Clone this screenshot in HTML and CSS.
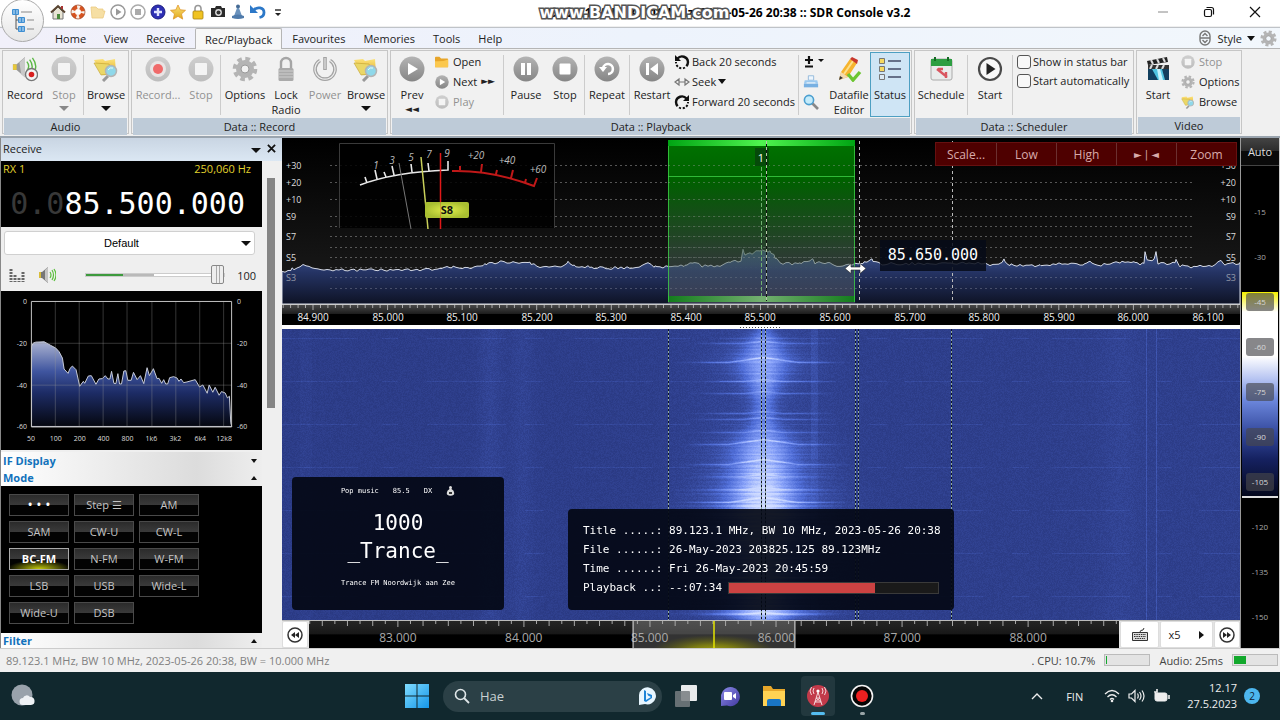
FILE: index.html
```html
<!DOCTYPE html>
<html lang="en">
<head>
<meta charset="utf-8">
<title>SDR Console v3.2</title>
<link rel="stylesheet" href="styles.css">
</head>
<body>
<svg class="sprite" aria-hidden="true">
  <defs>
    <linearGradient id="gBall" x1="0" y1="0" x2="0" y2="1"><stop offset="0" stop-color="#b4b4b4"/><stop offset="1" stop-color="#858585"/></linearGradient>
    <linearGradient id="gPale" x1="0" y1="0" x2="0" y2="1"><stop offset="0" stop-color="#cfcfcf"/><stop offset="1" stop-color="#bdbdbd"/></linearGradient>
    <linearGradient id="gGold" x1="0" y1="0" x2="0" y2="1"><stop offset="0" stop-color="#fbe27a"/><stop offset="1" stop-color="#e0a91c"/></linearGradient>
    <linearGradient id="gWin" x1="0" y1="0" x2="1" y2="1"><stop offset="0" stop-color="#7fdcff"/><stop offset="1" stop-color="#1596e8"/></linearGradient>
    <linearGradient id="gTeams" x1="0" y1="0" x2="1" y2="1"><stop offset="0" stop-color="#8a8ae6"/><stop offset="1" stop-color="#4338a0"/></linearGradient>
  </defs>
  <symbol id="tree" viewBox="0 0 26 26"><path d="M6 5v16h5M6 12h5" fill="none" stroke="#555"/><rect x="2" y="1" width="7" height="6" rx="1" fill="#3f8fd2"/><rect x="8" y="9" width="7" height="6" rx="1" fill="#3f8fd2"/><rect x="8" y="18" width="7" height="6" rx="1" fill="#3f8fd2"/><path d="M4 2v4M7 2v4M10 10v4M13 10v4M10 19v4M13 19v4" stroke="#cfe5f7"/><path d="M11 4h11M17 12h7M17 21h7" stroke="#888"/></symbol>
  <symbol id="house" viewBox="0 0 16 16"><path d="M3 8v7h10V8L8 3z" fill="#e8e4d4" stroke="#777"/><path d="M1 8.500L8 2l7 6.500" fill="none" stroke="#5a4632" stroke-width="2"/><path d="M7 10h3v5H7z" fill="#4b8a3b"/><path d="M12 2v3" stroke="#a33" stroke-width="2"/></symbol>
  <symbol id="ring" viewBox="0 0 16 16"><circle cx="8" cy="8" r="5" fill="none" stroke="#d65320" stroke-width="4"/><circle cx="8" cy="8" r="5" fill="none" stroke="#f6efe8" stroke-width="4" stroke-dasharray="3 4.850" stroke-dashoffset="1.500"/><circle cx="8" cy="8" r="7" fill="none" stroke="#9c4020" stroke-width=".7"/></symbol>
  <symbol id="folderPale" viewBox="0 0 16 16"><path d="M1 3h5l2 2h5v2l2 0-2 7H2z" fill="#f6dfa4" stroke="#ecca80" stroke-width=".8"/></symbol>
  <symbol id="playO" viewBox="0 0 16 16"><circle cx="8" cy="8" r="7" fill="#fff" stroke="#999" stroke-width="1.500"/><path d="M6 4.500l5.500 3.500L6 11.500z" fill="#999"/></symbol>
  <symbol id="stopO" viewBox="0 0 16 16"><circle cx="8" cy="8" r="7" fill="#fff" stroke="#aaa" stroke-width="1.500"/><path d="M5 5h6v6H5z" fill="#aaa"/></symbol>
  <symbol id="plusBall" viewBox="0 0 16 16"><circle cx="8" cy="8" r="7" fill="#2d2fb4" stroke="#1b1c80"/><path d="M8 4v8M4 8h8" stroke="#dfe3ff" stroke-width="2.400"/></symbol>
  <symbol id="star" viewBox="0 0 16 16"><path d="M8 1l2.200 4.800 5.300.5-4 3.600 1.200 5.200L8 12.300l-4.700 2.800 1.200-5.200-4-3.600 5.300-.5z" fill="url(#gGold)" stroke="#e0962a" stroke-width=".8"/></symbol>
  <symbol id="lockGold" viewBox="0 0 16 16"><path d="M5 7V4.500a3 3 0 0 1 6 0V7" fill="none" stroke="#999" stroke-width="1.600"/><rect x="3" y="7" width="10" height="8" rx="1" fill="#f0c322" stroke="#a98412" stroke-width=".8"/></symbol>
  <symbol id="camera" viewBox="0 0 16 16"><path d="M1 4h4l1-2h5l1 2h3v9H1z" fill="#2a2a2a"/><circle cx="8.500" cy="8.500" r="3.400" fill="#ddd"/><circle cx="8.500" cy="8.500" r="2" fill="#333"/></symbol>
  <symbol id="buoy" viewBox="0 0 16 16"><circle cx="8" cy="2.500" r="2" fill="#456a94"/><path d="M7 4h2l3 8H4z" fill="#6b93bd"/><path d="M2 12q6-3 12 0v2q-6 2-12 0z" fill="#4f7bab"/></symbol>
  <symbol id="undo" viewBox="0 0 16 16"><path d="M3.500 6.500C7 2 14 3.500 14 8.500c0 3-2 4.500-4.500 5" fill="none" stroke="#2c78c8" stroke-width="2.800"/><path d="M0 1v8h8z" fill="#2c78c8"/></symbol>
  <symbol id="speakerRec" viewBox="0 0 28 28"><path d="M1 9h4l9-8v22l-9-8H1z" fill="#999"/><path d="M1 9h4v6H1z" fill="#e8c93a"/><path d="M8 7l6-6v22l-4-3z" fill="#c9c9c9"/><path d="M16 6q4 5 0 10M19 4q5 7 1 13M22 2q6 8 2 15" fill="none" stroke="#5cb846" stroke-width="1.500"/><circle cx="21" cy="20" r="6.500" fill="#f3f3f3" stroke="#777" stroke-width="1.500"/><circle cx="21" cy="20" r="3" fill="#d81e1e"/></symbol>
  <symbol id="stopPale" viewBox="0 0 26 26"><circle cx="13" cy="13" r="12.500" fill="url(#gPale)"/><rect x="7" y="7" width="12" height="12" rx="1" fill="#f4f4f4"/></symbol>
  <symbol id="recPale" viewBox="0 0 26 26"><circle cx="13" cy="13" r="12.500" fill="url(#gPale)"/><circle cx="13" cy="13" r="8" fill="#e9e4e4"/><circle cx="13" cy="13" r="5" fill="#f06a6a"/></symbol>
  <symbol id="browse" viewBox="0 0 26 26"><path d="M1 4l9-1 2 2 10-2 1 14-14 2z" fill="url(#gGold)"/><path d="M1 7l15 1 4 10-12 1z" fill="#ead767" stroke="#c39f2d" stroke-width=".6"/><path d="M15 20l-5 5" stroke="#999" stroke-width="3"/><circle cx="18" cy="15" r="5.500" fill="#8fd8ea" stroke="#b4b4b4" stroke-width="1.500"/><path d="M15 14q2-3 5-2" stroke="#e8fbff" fill="none"/></symbol>
  <symbol id="gear" viewBox="0 0 26 26"><circle cx="13" cy="13" r="6.500" fill="none" stroke="#b4b4b4" stroke-width="5"/><circle cx="13" cy="13" r="10.300" fill="none" stroke="#b4b4b4" stroke-width="4" stroke-dasharray="4.600 3.490"/><circle cx="13" cy="13" r="4" fill="none" stroke="#999"/></symbol>
  <symbol id="lockGray" viewBox="0 0 26 26"><path d="M8 12V7a5 5 0 0 1 10 0v5" fill="none" stroke="#a5a5a5" stroke-width="2.400"/><rect x="5.500" y="12" width="15" height="13" rx="1.500" fill="#aaa"/><path d="M6 15h14M6 18h14M6 21h14" stroke="#d2d2d2" stroke-width=".9"/></symbol>
  <symbol id="power" viewBox="0 0 26 26"><path d="M8 4.500a10 10 0 1 0 10 0" fill="none" stroke="#a3a3a3" stroke-width="3.600"/><path d="M8 4.500a10 10 0 1 0 10 0" fill="none" stroke="#ededed" stroke-width="1.200"/><path d="M13 1v13" stroke="#a3a3a3" stroke-width="3.600"/><path d="M13 2v11" stroke="#ededed" stroke-width="1"/></symbol>
  <symbol id="play" viewBox="0 0 26 26"><circle cx="13" cy="13" r="12.500" fill="url(#gBall)"/><path d="M9 7l10 6-10 6z" fill="#fff"/></symbol>
  <symbol id="pause" viewBox="0 0 26 26"><circle cx="13" cy="13" r="12.500" fill="url(#gBall)"/><path d="M8 7h4v12H8zM14 7h4v12h-4z" fill="#fff"/></symbol>
  <symbol id="stop" viewBox="0 0 26 26"><circle cx="13" cy="13" r="12.500" fill="url(#gBall)"/><rect x="7.500" y="7.500" width="11" height="11" rx="1" fill="#fff"/></symbol>
  <symbol id="repeat" viewBox="0 0 26 26"><circle cx="13" cy="13" r="12.500" fill="url(#gBall)"/><path d="M9 12a5 5 0 1 1 5 6" fill="none" stroke="#fff" stroke-width="2.600"/><path d="M5 11h8l-4 5z" fill="#fff"/></symbol>
  <symbol id="restart" viewBox="0 0 26 26"><circle cx="13" cy="13" r="12.500" fill="url(#gBall)"/><path d="M7 7h3v12H7zM19 7v12l-8-6z" fill="#fff"/></symbol>
  <symbol id="folder" viewBox="0 0 16 16"><path d="M0 3q0-1 1-1h4l2 2h7q1 0 1 1v8q0 1-1 1H1q-1 0-1-1z" fill="#e7a529"/><path d="M0 7q8 1 15-2v8q0 1-1 1H1q-1 0-1-1z" fill="#fbc84e"/></symbol>
  <symbol id="back20" viewBox="0 0 16 16"><path d="M3.500 4.500A6 6 0 0 1 14 8c0 2-.6 3-1.600 4.200" fill="none" stroke="#111" stroke-width="2.400"/><path d="M11 13.500A6 6 0 0 1 2 8" fill="none" stroke="#111" stroke-width="2" stroke-dasharray="2.200 1.600"/><path d="M1 1v6h6z" fill="#111"/></symbol>
  <symbol id="fwd20" viewBox="0 0 16 16"><path d="M12.500 4.500A6 6 0 0 0 2 8c0 2 .6 3 1.600 4.200" fill="none" stroke="#111" stroke-width="2.400"/><path d="M5 13.500A6 6 0 0 0 14 8" fill="none" stroke="#111" stroke-width="2" stroke-dasharray="2.200 1.600"/><path d="M15 1v6H9z" fill="#111"/></symbol>
  <symbol id="seek" viewBox="0 0 16 16"><path d="M5 5L1 8l4 3zM11 5l4 3-4 3zM5 8h6" fill="#eee" stroke="#777" stroke-width="1.200"/></symbol>
  <symbol id="plusminus" viewBox="0 0 22 16"><path d="M6 2v8M2 6h8M2 12.500h8" stroke="#111" stroke-width="2.200"/><path d="M15 5h6l-3 3z" fill="#111"/></symbol>
  <symbol id="printer" viewBox="0 0 18 16"><path d="M6 1h6v5H6z" fill="#eef6fd" stroke="#8db6da"/><path d="M2 6h14l1 4H1z" fill="#9ccaf0"/><path d="M1 10h16v4H1z" fill="#78b0e2"/><path d="M4 9h10" stroke="#fff"/></symbol>
  <symbol id="lens" viewBox="0 0 16 16"><path d="M9 9l6 6" stroke="#888" stroke-width="2.600"/><circle cx="6" cy="6" r="4.600" fill="#c5ecfb" stroke="#4b9fd0" stroke-width="1.600"/></symbol>
  <symbol id="pencil" viewBox="0 0 26 26"><path d="M3 24l2-8L14 3l7 4-9 14z" fill="#f6b42e"/><path d="M8 18l9-13" stroke="#fde08c" stroke-width="2"/><path d="M14 3l2-2 6 3-1 4z" fill="#c8372c"/><path d="M3 24l2-8 7 5z" fill="#f3d9b0"/><path d="M3 24l1-4 3 2z" fill="#333"/><path d="M12 18l5 6 7-8" fill="none" stroke="#6cc531" stroke-width="3.400"/></symbol>
  <symbol id="status" viewBox="0 0 26 26"><g fill="#f6d860" stroke="#777"><path d="M2.500 2.500h5v5h-5zM2.500 10.500h5v5h-5z"/><path d="M2.500 18.500h5v5h-5z" fill="#dceaf5"/></g><path d="M11 5h13M11 13h13M11 21h13" stroke="#444b66" stroke-width="1.400"/></symbol>
  <symbol id="calendar" viewBox="0 0 26 26"><rect x="3" y="3" width="21" height="21" rx="2" fill="#e9ecec" stroke="#aaa"/><path d="M3 3h21v7H3z" fill="#2e9e42"/><path d="M7 1v4M20 1v4" stroke="#146b24" stroke-width="2"/><path d="M9 13l10 8M10 13h5M18 16v6" fill="none" stroke="#d95660" stroke-width="2.400"/></symbol>
  <symbol id="playRing" viewBox="0 0 26 26"><circle cx="13" cy="13" r="11" fill="#f8f8f8" stroke="#4a4a4a" stroke-width="2.200"/><path d="M9.500 7l9 6-9 6z" fill="#222"/></symbol>
  <symbol id="clapper" viewBox="0 0 26 26"><path d="M2 5L22 1l1 5L3 9z" fill="#222"/><path d="M6 4l2 4M12 3l2 4M18 2l2 4" stroke="#ddd" stroke-width="2"/><path d="M3 9h21v4H3z" fill="#333"/><path d="M7 9l-2 4M13 9l-2 4M19 9l-2 4" stroke="#ddd" stroke-width="2"/><path d="M3 13h21v11H3z" fill="#123f5e"/><path d="M7 13l6 11h7l-3-11z" fill="#4fc3df"/><path d="M12 13l2 11h4l-3-11z" fill="#c5f3fb"/></symbol>
  <symbol id="expand" viewBox="0 0 16 16"><path d="M3 8V6a5 5 0 0 1 10 0v2zM3 8v2a5 5 0 0 0 10 0V8z" fill="none" stroke="#777" stroke-width="1.400"/><path d="M5.500 6L8 3.500 10.500 6M5.500 10L8 12.500l2.500-2.500" fill="none" stroke="#777" stroke-width="1.400"/></symbol>
  <symbol id="speaker" viewBox="0 0 18 16"><path d="M1 5h3l6-5v16l-6-5H1z" fill="#777"/><path d="M7 3l3-3v16l-3-3z" fill="#c4c4c4"/><path d="M1 5h2v6H1z" fill="#d9bd3a"/><path d="M12 5q2 3 0 6M14 3q3 5 0 10M16 2q4 6 0 12" fill="none" stroke="#5cbf3d" stroke-width="1.200"/></symbol>
  <symbol id="eq" viewBox="0 0 16 14"><path d="M2 1v13M6 7v7M10 10v4M14 4v10" stroke="#666" stroke-width="3" stroke-dasharray="2 1"/></symbol>
</svg>

<header class="titlebar">
  <button class="appmenu" aria-label="Application menu"><svg width="26" height="26"><use href="#tree"/></svg></button>
  <nav class="quick" aria-label="Quick access">
    <button aria-label="Home"><svg><use href="#house"/></svg></button>
    <button aria-label="Support"><svg><use href="#ring"/></svg></button>
    <button aria-label="Open"><svg><use href="#folderPale"/></svg></button>
    <button aria-label="Play"><svg><use href="#playO"/></svg></button>
    <button aria-label="Stop"><svg><use href="#stopO"/></svg></button>
    <button aria-label="Add"><svg><use href="#plusBall"/></svg></button>
    <button aria-label="Favourite"><svg><use href="#star"/></svg></button>
    <button aria-label="Lock"><svg><use href="#lockGold"/></svg></button>
    <button aria-label="Snapshot"><svg><use href="#camera"/></svg></button>
    <button aria-label="Marker"><svg><use href="#buoy"/></svg></button>
    <button aria-label="Undo"><svg><use href="#undo"/></svg></button>
    <button aria-label="Customise"><svg viewBox="0 0 16 16"><path d="M5 6h6" stroke="#222" stroke-width="1.400"/><path d="M5 9h6l-3 3z" fill="#222"/></svg></button>
  </nav>
  <div class="caption">
    <h1>89.123.1 MHz, BW 10 MHz, 2023-05-26 20:38 :: SDR Console v3.2<span class="watermark">www.BANDICAM.com</span></h1>
  </div>
  <div class="wincontrols">
    <button aria-label="Minimise"><svg viewBox="0 0 12 12"><path d="M1 6h10" stroke="#888"/></svg></button>
    <button aria-label="Restore"><svg viewBox="0 0 12 12" fill="none" stroke="#111" stroke-width="1.200"><rect x="1.500" y="3.500" width="7" height="7" rx="1.500"/><path d="M3.500 1.500h5q2 0 2 2v5"/></svg></button>
    <button aria-label="Close"><svg viewBox="0 0 12 12"><path d="M1 1l10 10M11 1L1 11" stroke="#111" stroke-width="1.200"/></svg></button>
  </div>
</header>

<nav class="tabs">
  <button>Home</button><button>View</button><button>Receive</button><button class="on">Rec/Playback</button><button>Favourites</button><button>Memories</button><button>Tools</button><button>Help</button>
  <div class="style"><svg width="16" height="16"><use href="#expand"/></svg><button>Style</button><i class="down"></i><svg width="17" height="17"><use href="#gear"/></svg></div>
</nav>

<section class="ribbon">
  <div class="group">
    <div class="tools">
      <button class="big w42"><svg><use href="#speakerRec"/></svg>Record</button>
      <button class="big w36 off"><svg><use href="#stopPale"/></svg>Stop<i class="down"></i></button>
      <hr>
      <button class="big w42"><svg><use href="#browse"/></svg>Browse<i class="down"></i></button>
    </div>
    <h2>Audio</h2>
  </div>
  <div class="group">
    <div class="tools">
      <button class="big w50 off"><svg><use href="#recPale"/></svg>Record...</button>
      <button class="big w36 off"><svg><use href="#stopPale"/></svg>Stop</button>
      <hr>
      <button class="big w46"><svg><use href="#gear"/></svg>Options</button>
      <button class="big w36"><svg><use href="#lockGray"/></svg>Lock<br>Radio</button>
      <button class="big w42 off"><svg><use href="#power"/></svg>Power</button>
      <button class="big w38"><svg><use href="#browse"/></svg>Browse<i class="down"></i></button>
    </div>
    <h2>Data :: Record</h2>
  </div>
  <div class="group">
    <div class="tools">
      <button class="big w38"><svg><use href="#play"/></svg>Prev<span class="tri">◄◄</span></button>
      <div class="stack w70">
        <button><svg><use href="#folder"/></svg>Open</button>
        <button><svg><use href="#play"/></svg>Next <span class="tri">►►</span></button>
        <button class="off"><svg><use href="#stopPale"/></svg>Play</button>
      </div>
      <hr>
      <button class="big w42"><svg><use href="#pause"/></svg>Pause</button>
      <button class="big w36"><svg><use href="#stop"/></svg>Stop</button>
      <hr>
      <button class="big w42"><svg><use href="#repeat"/></svg>Repeat</button>
      <hr>
      <button class="big w42"><svg><use href="#restart"/></svg>Restart</button>
      <div class="stack wide w124">
        <button><svg><use href="#back20"/></svg>Back 20 seconds</button>
        <button><svg><use href="#seek"/></svg>Seek<i class="down"></i></button>
        <button><svg><use href="#fwd20"/></svg>Forward 20 seconds</button>
      </div>
      <hr>
      <div class="stack icons w28">
        <button aria-label="Adjust"><svg class="pm"><use href="#plusminus"/></svg></button>
        <button aria-label="Print"><svg><use href="#printer"/></svg></button>
        <button aria-label="Find"><svg><use href="#lens"/></svg></button>
      </div>
      <button class="big w42"><svg><use href="#pencil"/></svg>Datafile<br>Editor</button>
      <button class="big w38 pressed"><svg><use href="#status"/></svg>Status</button>
    </div>
    <h2>Data :: Playback</h2>
  </div>
  <div class="group">
    <div class="tools">
      <button class="big w50"><svg><use href="#calendar"/></svg>Schedule</button>
      <hr>
      <button class="big w42"><svg><use href="#playRing"/></svg>Start</button>
      <hr>
      <div class="stack checks w118">
        <label><input type="checkbox">Show in status bar</label>
        <label><input type="checkbox">Start automatically</label>
      </div>
    </div>
    <h2>Data :: Scheduler</h2>
  </div>
  <div class="group">
    <div class="tools">
      <button class="big w38"><svg><use href="#clapper"/></svg>Start</button>
      <div class="stack w64">
        <button class="off"><svg><use href="#stopPale"/></svg>Stop</button>
        <button><svg><use href="#gear"/></svg>Options</button>
        <button><svg><use href="#browse"/></svg>Browse</button>
      </div>
    </div>
    <h2>Video</h2>
  </div>
</section>

<main>
  <aside class="side">
    <header class="sidehead"><h2>Receive</h2><button aria-label="Menu"><i class="down"></i></button><button aria-label="Close panel"><svg width="9" height="9" viewBox="0 0 10 10"><path d="M1 1l8 8M9 1L1 9" stroke="#111" stroke-width="2"/></svg></button></header>
    <div class="sidebody">
      <div class="panel">
        <section class="rx">
          <div class="rxtop"><span>RX 1</span><span>250,060 Hz</span></div>
          <output class="freq"><span>0.0</span>85.500.000</output>
        </section>
        <label class="combo"><select aria-label="Profile"><option>Default</option></select><i class="down"></i></label>
        <div class="volume">
          <svg width="16" height="14"><use href="#eq"/></svg>
          <svg width="18" height="16"><use href="#speaker"/></svg>
          <input type="range" aria-label="Volume" min="0" max="100" value="100"><output>100</output>
        </div>
        <svg class="audio" viewBox="0 0 262 160" role="img" aria-label="Audio spectrum">
          <defs><linearGradient id="gAudio" x1="0" y1="0" x2="0" y2="1"><stop offset="0" stop-color="#aab2d0"/><stop offset=".35" stop-color="#3f559f"/><stop offset=".6" stop-color="#1d2c66"/><stop offset="1" stop-color="#05070f"/></linearGradient></defs>
          <g transform="translate(0 -1) scale(.3333)">
            <path fill="url(#gAudio)" stroke="#c8ccd8" stroke-width="3" d="M92 411V170L97 160 105 157 130 156 150 167 165 175 175 186 185 205 190 238 202 251 208 236 215 229 226 240 237 290 248 275 252 281 263 259 272 258 286 284 295 268 305 267 314 258 322 268 328 268 333 245 340 281 346 282 352 252 357 283 363 283 370 244 376 243 382 272 392 272 399 248 410 270 420 258 430 282 440 234 447 258 459 237 470 267 476 266 484 281 490 270 496 283 502 283 508 264 520 261 530 265 536 275 542 268 550 279 560 277 585 270 598 292 608 286 621 311 627 286 638 308 645 293 657 317 664 306 675 310 682 325 688 320 692 400 695 411z"/>
          </g>
          <path d="M54.500 10v126M78.500 10v126M102.500 10v126M126.500 10v126M151.500 10v126M175.500 10v126M199.500 10v126M223.500 10v126M30 52.500h202M30 94.500h202" stroke="#999" stroke-opacity=".35"/>
          <path d="M30.500 10.500h201v126h-201z" fill="none" stroke="#c4c4c4"/>
          <g class="axis"><g text-anchor="end"><text x="26" y="13">0</text><text x="26" y="55">-20</text><text x="26" y="97">-40</text><text x="26" y="139">-60</text></g>
          <text x="237" y="13">0</text><text x="237" y="55">-20</text><text x="237" y="97">-40</text><text x="237" y="139">-60</text>
          <g text-anchor="middle"><text x="30" y="151">50</text><text x="55" y="151">100</text><text x="79" y="151">200</text><text x="103" y="151">400</text><text x="127" y="151">800</text><text x="151" y="151">1k6</text><text x="175" y="151">3k2</text><text x="200" y="151">6k4</text><text x="224" y="151">12k8</text></g></g>
        </svg>
        <h3 class="fold">IF Display<i class="down"></i></h3>
        <h3 class="fold">Mode<i class="up"></i></h3>
        <div class="modes">
          <button class="dots">• • •</button><button>Step ☰</button><button>AM</button>
          <button>SAM</button><button>CW-U</button><button>CW-L</button>
          <button class="on">BC-FM</button><button>N-FM</button><button>W-FM</button>
          <button>LSB</button><button>USB</button><button>Wide-L</button>
          <button>Wide-U</button><button>DSB</button>
        </div>
        <h3 class="fold last">Filter<i class="up"></i></h3>
      </div>
      <div class="scroll"><i></i></div>
    </div>
  </aside>

  <section class="display">
    <div class="spectrum">
      <svg viewBox="0 0 958 186" role="img" aria-label="Spectrum">
        <defs>
          <linearGradient id="gBack" x1="0" y1="0" x2="0" y2="1"><stop offset="0" stop-color="#000"/><stop offset="1" stop-color="#1d1d1d"/></linearGradient>
          <linearGradient id="gTrace" gradientUnits="userSpaceOnUse" x1="0" y1="112" x2="0" y2="165"><stop offset="0" stop-color="#455f9c"/><stop offset=".4" stop-color="#26366b"/><stop offset="1" stop-color="#0d1226"/></linearGradient>
          <linearGradient id="gGreen" x1="0" y1="0" x2="0" y2="1"><stop offset="0" stop-color="#007400"/><stop offset=".25" stop-color="#006000"/><stop offset=".6" stop-color="#25502a" stop-opacity=".8"/><stop offset=".8" stop-color="#4c5f5c" stop-opacity=".4"/><stop offset="1" stop-color="#777788" stop-opacity=".4"/></linearGradient>
          <linearGradient id="gBar" x1="0" y1="0" x2="1" y2="0"><stop offset="0" stop-color="#00a413"/><stop offset=".5" stop-color="#4ff54f"/><stop offset="1" stop-color="#00a413"/></linearGradient>
          <linearGradient id="gBar2" x1="0" y1="0" x2="1" y2="0"><stop offset="0" stop-color="#137c1c"/><stop offset=".5" stop-color="#74b070"/><stop offset="1" stop-color="#137c1c"/></linearGradient>
          <linearGradient id="gRule" x1="0" y1="0" x2="0" y2="1"><stop offset="0" stop-color="#484848"/><stop offset="1" stop-color="#1c1c1c"/></linearGradient>
          <radialGradient id="gLime"><stop offset="0" stop-color="#e3f04c"/><stop offset="1" stop-color="#a9bf31"/></radialGradient>
        </defs>
        <path d="M0 0h958v165H0z" fill="url(#gBack)"/>
        <g stroke="#777" stroke-dasharray="2 3" stroke-opacity=".7"><path d="M48 26.500h863M48 43.500h863M48 60.500h863M48 77.500h863M48 87.500h863M48 97.500h863M48 108.500h863M48 118.500h863M48 128.500h863M48 138.500h863M48 149.500h863"/></g>
        <path d="M57 4h216v85H57z" fill="#000" fill-opacity=".85"/>
        <path d="M57.500 89V4.500h215V89" fill="none" stroke="#3a3a3a"/>
        <path id="trace" fill="url(#gTrace)" fill-opacity=".92" stroke="#d5dae6"/>
        <path d="M48 138.500h863M48 149.500h863" stroke="#99a" stroke-dasharray="2 3" stroke-opacity=".35"/>
        <rect x="386" y="1" width="187" height="163" fill="url(#gGreen)"/>
        <rect x="386" y="1" width="187" height="6" fill="url(#gBar)"/><rect x="386" y="157" width="187" height="6" fill="url(#gBar2)"/>
        <path d="M386 37.500h187M386.500 7v156M572.500 7v156" stroke="#3ccf46" stroke-opacity=".8"/>
        <path d="M386 26.500h187M386 43.500h187M386 60.500h187M386 77.500h187M386 87.500h187M386 97.500h187M386 108.500h187M386 118.500h187" stroke="#9a9a9a" stroke-dasharray="2 3" stroke-opacity=".4"/>
        <rect x="473" y="9" width="14" height="18" fill="#064a0a"/>
        <text x="479" y="23" class="mk">1</text>
        <path d="M479.500 28v130" stroke="#6fb070" stroke-dasharray="4 2"/><path d="M484.500 2v160" stroke="#111"/><path d="M484.500 2v160" stroke="#b5c7a8" stroke-dasharray="3 3"/>
        <path d="M577.500 2v162M670.500 2v162" stroke="#bbb" stroke-dasharray="3 3"/>
        <g fill="none"><path d="M78 46Q112 33 166 31V22M85 44l-2-6M95 40l-2-9M104 38l-2-5M112 36l-2-9M130 33l-1-8M147 32l-1-8" stroke="#e8e8e8" stroke-width="1.600"/><path d="M170 32Q210 31 252 47l3-8M199 33l1-8M229 39l2-8M178 31v-4M214 35l1-4M243 44l1-4" stroke="#c01818" stroke-width="2"/></g>
        <path d="M117 24l12 66" stroke="#777"/><path d="M139 18l7 72" stroke="#c9d05a" stroke-width="1.500"/><path d="M158.500 14v76" stroke="#e01818" stroke-width="1.500"/>
        <g class="dial"><text x="94" y="30">1</text><text x="110" y="25">3</text><text x="129" y="22">5</text><text x="147" y="19">7</text><text x="165" y="18">9</text><text x="194" y="20">+20</text><text x="225" y="25">+40</text><text x="256" y="34">+60</text></g>
        <rect x="143" y="63" width="44" height="16" rx="2" fill="url(#gLime)"/><text x="165" y="75" class="s8">S8</text><path d="M158.500 63v16" stroke="#d8482a" stroke-opacity=".35"/>
        <g class="db"><text x="4" y="30">+30</text><text x="4" y="47">+20</text><text x="4" y="64">+10</text><text x="4" y="81">S9</text><text x="4" y="101">S7</text><text x="4" y="122">S5</text><text x="4" y="142" opacity=".6">S3</text>
        <g text-anchor="end"><text x="954" y="30">+30</text><text x="954" y="47">+20</text><text x="954" y="64">+10</text><text x="954" y="81">S9</text><text x="954" y="101">S7</text><text x="954" y="122">S5</text><text x="954" y="142" opacity=".6">S3</text></g></g>
        <path d="M598 101h106v31H598z" fill="#060a18" fill-opacity=".85"/><text x="651" y="121" class="tip">85.650.000</text>
        <path d="M563 129.500l6-5v3.500h9v-3.500l6 5-6 5V131h-9v3.500z" fill="#fff" stroke="#222" stroke-width=".6"/>
        <path d="M0 165h958v21H0z" fill="#000"/><path d="M0 166h958v9H0z" fill="url(#gRule)"/><path d="M0 165.500h958" stroke="#ccc"/>
        <g id="ruler" class="rule"></g>
      </svg>
      <div class="redbar"><button>Scale...</button><button>Low</button><button>High</button><button class="tri">► | ◄</button><button>Zoom</button></div>
    </div>
    <div class="splitter"></div>
    <div class="waterfall">
      <canvas id="fall" width="958" height="291"></canvas>
      <section class="rds"><p><span>Pop music</span><span>85.5</span><span>DX</span><svg width="9" height="10" viewBox="0 0 9 10"><path d="M3 1.500a1.500 1.500 0 0 1 3 0L5.500 3Q9 5 8 8.500 4.500 11 1 8.500 0 5 3.500 3z" fill="#ddd"/><path d="M3 6h3v2H3z" fill="#333"/></svg></p><strong>1000<br>_Trance_</strong><p>Trance FM Noordwijk aan Zee</p></section>
      <section class="info"><p>Title .....: 89.123.1 MHz, BW 10 MHz, 2023-05-26 20:38</p><p>File ......: 26-May-2023 203825.125 89.123MHz</p><p>Time ......: Fri 26-May-2023 20:45:59</p><p class="play"><span>Playback ..: --:07:34</span><span class="bar"><i style="width:70%"></i></span></p></section>
    </div>
    <div class="band">
      <button class="sq" aria-label="Band down"><svg width="16" height="16" viewBox="0 0 16 16"><circle cx="8" cy="8" r="7" fill="none" stroke="#333" stroke-width="1.500"/><path d="M8 5v6L4 8zM12 5v6L8 8z" fill="#222"/></svg></button>
      <svg class="bandscale" viewBox="0 0 811 28" preserveAspectRatio="xMinYMin slice" role="img" aria-label="Band">
        <defs><linearGradient id="gBand" x1="0" y1="0" x2="0" y2="1"><stop offset="0" stop-color="#252525"/><stop offset=".45" stop-color="#181818"/><stop offset=".5" stop-color="#000"/></linearGradient><radialGradient id="gGlow" gradientUnits="userSpaceOnUse" cx="0" cy="0" r="1" gradientTransform="translate(405 30) scale(62 16)"><stop offset="0" stop-color="#aaaa08"/><stop offset=".4" stop-color="#8a8a0c" stop-opacity=".8"/><stop offset="1" stop-color="#66660a" stop-opacity="0"/></radialGradient></defs>
        <path d="M0 0h811v28H0z" fill="url(#gBand)"/><path d="M324 0h163v28H324z" fill="#fff" fill-opacity=".2"/><path d="M324 6h163v22H324z" fill="url(#gGlow)"/>
        <g id="bandticks" class="bandtext"></g><path d="M324.500 0v28M486.500 0v28" stroke="#ddd"/><path d="M405.500 0v28" stroke="#e6e600" stroke-width="1.500"/>
      </svg>
      <button class="kb" aria-label="Keyboard"><svg width="18" height="14" viewBox="0 0 18 14"><path d="M1.500 4.500h15v8h-15z" fill="#ddd" stroke="#333"/><path d="M3 6.500h12M3 8.500h12M4 10.500h10" stroke="#333" stroke-dasharray="1.500 .8"/><path d="M9 4q0-2 3-2l1-2" fill="none" stroke="#333"/></svg></button>
      <button class="x5">x5<svg width="6" height="8" viewBox="0 0 6 8"><path d="M0 0l5 4-5 4z" fill="#111"/></svg></button>
      <button class="sq" aria-label="Band up"><svg width="16" height="16" viewBox="0 0 16 16"><circle cx="8" cy="8" r="7" fill="none" stroke="#333" stroke-width="1.500"/><path d="M4 5v6l4-3zM8 5v6l4-3z" fill="#222"/></svg></button>
    </div>
  </section>

  <aside class="levels">
    <button>Auto</button>
    <ul><li>-15</li><li>-30</li><li class="b">-45</li><li class="b">-60</li><li class="b">-75</li><li class="b">-90</li><li class="b">-105</li><li>-120</li><li>-135</li><li>-150</li></ul>
  </aside>
</main>

<footer class="statusbar">
  <span class="desc">89.123.1 MHz, BW 10 MHz, 2023-05-26 20:38, BW = 10.000 MHz</span>
  <span>. CPU: 10.7%</span><span class="gauge"><i class="thin"></i></span>
  <span>Audio: 25ms</span><span class="gauge"><i style="width:29%"></i></span>
</footer>

<nav class="taskbar">
  <div><svg width="24" height="24" viewBox="0 0 24 24"><circle cx="11" cy="11" r="10.500" fill="#99a2ab"/><path d="M12 21a3.500 3.500 0 0 1 0-7 4 4 0 0 1 7-1 4 4 0 0 1 1 8z" fill="#eef1f4"/></svg></div>
  <div class="dock">
    <button class="start" aria-label="Start"><svg width="24" height="24" viewBox="0 0 24 24"><path d="M0 0h11.500v11.500H0zM12.500 0H24v11.500H12.500zM0 12.500h11.500V24H0zM12.500 12.500H24V24H12.500z" fill="url(#gWin)"/></svg></button>
    <label class="search"><svg width="16" height="16" viewBox="0 0 16 16"><circle cx="6.500" cy="6.500" r="5" fill="none" stroke="#dfe6e8" stroke-width="1.600"/><path d="M10 10l5 5" stroke="#dfe6e8" stroke-width="1.800"/></svg><input type="text" aria-label="Search" placeholder="Hae"><svg width="18" height="20" viewBox="0 0 18 20"><path d="M1 19V9a8.500 8.500 0 1 1 6 9z" fill="#e8f6ff"/><path d="M6 4l2 1v9l5-3-3-1.500L9 7l5 2v3l-6 4-2-1z" fill="#1c83d6"/></svg></label>
    <button aria-label="Task view"><svg width="22" height="22" viewBox="0 0 22 22"><rect x="6" y="0" width="16" height="16" rx="1" fill="#e9ebec"/><rect x="0" y="6" width="15" height="16" rx="1" fill="#777d80" fill-opacity=".85"/></svg></button>
    <button aria-label="Chat"><svg width="20" height="22" viewBox="0 0 20 22"><path d="M1 21V10a9.500 9.500 0 1 1 6 10.500z" fill="url(#gTeams)"/><rect x="4" y="7" width="8" height="8" rx="1" fill="#fff"/><path d="M13 10l3-2v6l-3-2z" fill="#fff"/></svg></button>
    <button aria-label="Explorer"><svg width="24" height="22" viewBox="0 0 24 22"><path d="M1 1h8l2 3h12v17H1z" fill="#e7a72a"/><path d="M1 6h22v15H1z" fill="#ffd253"/><path d="M5 21v-5q0-2 2-2h10q2 0 2 2v5z" fill="#1976c5"/></svg></button>
    <button class="active" aria-label="SDR Console"><svg width="24" height="24" viewBox="0 0 24 24"><circle cx="12" cy="12" r="11" fill="#c23a4a"/><path d="M12 8l-4 13M12 8l4 13M10 14h4M9 18h6M10 14l5 4M14 14l-5 4M8 4q-2 3 0 6M5.500 3q-3 4 0 8M16 4q2 3 0 6M18.500 3q3 4 0 8" fill="none" stroke="#f4d6da"/><circle cx="12" cy="7" r="1.600" fill="#fff"/></svg></button>
    <button class="run" aria-label="Recorder"><svg width="24" height="24" viewBox="0 0 24 24"><circle cx="12" cy="12" r="10.500" fill="#050505" stroke="#f2f2f2" stroke-width="1.600"/><circle cx="12" cy="12" r="6" fill="#ee2020"/></svg></button>
  </div>
  <div class="tray">
    <svg width="12" height="8" viewBox="0 0 12 8"><path d="M1 7l5-5 5 5" fill="none" stroke="#eee" stroke-width="1.400"/></svg>
    <span class="lang">FIN</span>
    <svg width="16" height="14" viewBox="0 0 16 14"><path d="M1 5q7-7 14 0M3.500 8q4.500-4.500 9 0M6 10.500q2-2 4 0" fill="none" stroke="#eee" stroke-width="1.300"/><circle cx="8" cy="12" r="1.300" fill="#eee"/></svg>
    <svg width="17" height="14" viewBox="0 0 17 14"><path d="M1 5h2.500L7 1.500v11L3.500 9H1zM9.500 4.500q1.500 2.500 0 5M11.500 3q3 4 0 8M14 1.500q4 5.500 0 11" fill="none" stroke="#eee" stroke-width="1.200"/></svg>
    <svg width="17" height="14" viewBox="0 0 17 14"><rect x="2" y="4" width="12" height="8" rx="2" fill="#eee" stroke="#eee"/><path d="M16 6v4" stroke="#eee" stroke-width="1.600"/><path d="M4 0v3H2l1 4" fill="none" stroke="#eee" stroke-width="1.600"/></svg>
    <time>12.17<br>27.5.2023</time>
    <span class="count">2</span>
  </div>
</nav>
<script src="display.js"></script>
</body>
</html>
```
FILE: styles.css
```css
* { box-sizing: border-box; }
body { margin: 0; min-height: 100vh; display: flex; flex-direction: column; font-family: "Open Sans", "Noto Sans", sans-serif; font-size: 11px; line-height: 15px; color: #222; background: #efefef; }
button { font: inherit; color: inherit; background: none; border: 0; padding: 0; margin: 0; white-space: nowrap; }
h1, h2, h3, p, ul { margin: 0; padding: 0; font-size: inherit; font-weight: normal; list-style: none; }
svg { display: block; flex: none; }
.sprite { position: absolute; width: 0; height: 0; }
.down, .up { display: inline-block; flex: none; width: 0; height: 0; border: 4px solid transparent; border-top: 5px solid #111; border-bottom: 0; }
.up { border: 4px solid transparent; border-bottom: 5px solid #111; border-top: 0; }
.tri { font-family: "DejaVu Sans", sans-serif; }

.titlebar { position: relative; display: flex; align-items: center; height: 26px; background: #fff; padding: 0 2px 2px 0; }
.appmenu { position: absolute; z-index: 2; left: 1px; top: -1px; width: 43px; height: 43px; border: 1px solid #aaa; border-radius: 50%; background: linear-gradient(#fff, #f1f1f1 55%, #e6e6e6); display: grid; place-items: center; }
.quick { display: flex; gap: 4px; padding-left: 50px; }
.quick svg { width: 16px; height: 16px; }
.caption { flex: 1; display: flex; justify-content: center; padding-left: 28px; }
.caption h1 { position: relative; font-size: 12px; font-weight: 700; color: #000; white-space: nowrap; }
.watermark { position: absolute; left: -4px; top: -1px; font: 700 16px/17px "DejaVu Sans", sans-serif; color: #fff; -webkit-text-stroke: 3px #555; paint-order: stroke fill; }
.wincontrols { display: flex; }
.wincontrols button { width: 46px; height: 24px; display: grid; place-items: center; }
.wincontrols svg { width: 12px; height: 12px; }

.tabs { display: flex; height: 22px; border-top: 1px solid #bfc3c8; border-bottom: 1px solid #b5b5b5; margin-top: 1px; padding-left: 46px; background: linear-gradient(90deg, #f1f0fa, #edf3fc 50%, #f2f7fc); }
.tabs > button { padding: 0 9px; }
.tabs > .on { height: 21px; background: #f7f7f7; border: 1px solid #b5b5b5; border-bottom: 0; border-radius: 2px 2px 0 0; margin: 0 1px; }
.style { margin-left: auto; display: flex; align-items: center; gap: 5px; padding-right: 3px; }

.ribbon { display: flex; gap: 2px; padding: 1px 2px 2px; height: 89px; background: #f0f0f0; border-bottom: 2px solid #9aa4ae; }
.group { display: flex; flex-direction: column; border: 1px solid #c6c6c6; background: #f1f1f1; }
.tools { flex: 1; display: flex; align-items: flex-start; padding: 1px 1px 0; }
.group h2 { height: 17px; line-height: 17px; text-align: center; background: #becbd8; margin: 0 1px; }
.tools hr { width: 1px; height: 60px; margin: 3px 1px; border: 0; background: #ccc; }
.big { display: flex; flex-direction: column; align-items: center; height: 65px; padding-top: 4px; }
.big svg { width: 26px; height: 26px; margin-bottom: 5px; }
.big .down { margin-top: 4px; border-width: 5px 5px 0; }
.big .tri { font-size: 9px; }
.off { color: #929292; }
.off .down { border-top-color: #888; }
.pressed { background: #cfe5f5; border: 1px solid #4d9fc2; padding-top: 3px; }
.stack { display: flex; flex-direction: column; gap: 5px; padding: 2px 0 0 3px; }
.stack button, .stack label { display: flex; align-items: center; gap: 4px; height: 15px; }
.stack svg { width: 14px; height: 14px; }
.stack .tri { font-size: 9px; }
.wide { padding-left: 1px; }
.wide button { gap: 2px; }
.wide svg, .icons svg { width: 16px; height: 16px; }
.icons .pm { width: 22px; }
.checks { gap: 4px; }
.checks label { gap: 2px; white-space: nowrap; }
.checks input { appearance: none; width: 14px; height: 14px; margin: 0; border: 1px solid #555; border-radius: 3px; background: #f8f8f8; }
.w28 { width: 28px; } .w36 { width: 36px; } .w38 { width: 40px; } .w42 { width: 42px; } .w46 { width: 46px; } .w50 { width: 50px; }
.w64 { width: 62px; } .w70 { width: 70px; } .w118 { width: 118px; } .w124 { width: 124px; }

main { flex: 1; display: grid; grid-template-columns: 282px 1fr 40px; background: #000; border-bottom: 1px solid #ccc; }
.side { background: #efefef; border-left: 1px solid #888; display: flex; flex-direction: column; }
.sidehead { height: 23px; display: flex; align-items: center; gap: 6px; padding: 0 6px 3px 2px; background: linear-gradient(#c9d5e3, #dbe7f3); }
.sidehead h2 { flex: 1; }
.sidehead .down { border-width: 5px 5px 0; }
.sidebody { flex: 1; display: flex; }
.panel { width: 261px; display: flex; flex-direction: column; }
.rx { height: 66px; background: #000; color: #e1d22d; padding: 0 11px 0 2px; }
.rxtop { display: flex; justify-content: space-between; }
.freq { display: block; text-align: right; margin: 9px 6px 0 0; font: 30px/38px "DejaVu Sans Mono", monospace; color: #fff; }
.freq span { color: #383838; }
.combo { position: relative; display: block; margin: 4px 7px 0 3px; }
.combo select { appearance: none; width: 100%; height: 24px; border: 1px solid #d0d0d0; border-radius: 3px; background: #fff; text-align-last: center; padding: 0 16px 0 0; font: 11px "Liberation Sans", sans-serif; }
.combo .down { position: absolute; right: 4px; top: 10px; border-width: 5px 5px 0; }
.volume { display: flex; align-items: center; height: 36px; padding: 4px 6px 0 8px; }
.volume svg + svg { margin: 0 29px 0 13px; }
.volume input { appearance: none; width: 141px; height: 20px; margin: 0 12px 0 0; background: none; }
.volume input::-webkit-slider-runnable-track { height: 4px; border: 1px solid #ccc; background: linear-gradient(90deg, #3d9a3d 0 27%, #b9b9b9 27% 49%, #fff 49%); }
.volume input::-webkit-slider-thumb { appearance: none; width: 13px; height: 19px; margin-top: -9px; border: 1px solid #888; border-radius: 2px; background: linear-gradient(90deg, #eee 4px, #aaa 4px 5px, #eee 5px 7px, #aaa 7px 8px, #eee 8px); }
.audio { width: 100%; height: auto; background: #000; margin-bottom: 2px; }
.axis { font-size: 7px; fill: #ddd; }
.fold { display: flex; align-items: center; justify-content: space-between; height: 17px; padding: 0 5px 0 2px; font-weight: 700; color: #1272bc; background: linear-gradient(90deg, #fff, #dcdcdc 75%, #eee); }
.fold i { border-left-width: 3px; border-right-width: 3px; border-top-width: 4px; }
.fold .up { border-top-width: 0; border-bottom-width: 4px; }
.last { height: 15px; }
.modes { flex: 1; display: grid; grid-template-columns: repeat(3, 60px); grid-auto-rows: 22px; gap: 5px; align-content: start; padding: 8px 8px 7px; background: #000; }
.modes button { border: 1px solid #4a4a4a; background: linear-gradient(#2b2b2b, #3a3a3a 49%, #030303 50%); color: #c4c4c4; line-height: 18px; }
.modes .on { border-color: #aaa; color: #fff; font-weight: 700; background: radial-gradient(ellipse 32px 9px at 50% 100%, #c5cc0c, transparent), linear-gradient(#2b2b2b, #3a3a3a 49%, #030303 50%); }
.modes .dots { color: #fff; font-size: 14px; }
.scroll { padding: 17px 0 0 5px; }
.scroll i { display: block; width: 8px; height: 230px; background: #858585; }

.display { display: flex; flex-direction: column; padding-top: 1px; min-width: 0; }
.spectrum { position: relative; }
.spectrum > svg { width: 100%; height: auto; }
.redbar { position: absolute; right: 3px; top: 3px; display: grid; grid-template-columns: repeat(5, 60px); height: 24px; background: #4e0000; border: 1px solid #661010; color: #d8aaaa; font-size: 12px; }
.redbar button + button { border-left: 1px solid #6b3030; }
.redbar .tri { font-size: 10px; }
.db { font-size: 9px; fill: #ddd; }
.dial { font-size: 10px; font-style: italic; fill: #bbb; text-anchor: middle; }
.s8 { font-size: 11px; font-weight: 700; text-anchor: middle; fill: #111; }
.mk { font-size: 11px; text-anchor: middle; fill: #fff; }
.tip { font: 15px "DejaVu Sans Mono", monospace; text-anchor: middle; fill: #fff; }
.rule { font-size: 10px; text-anchor: middle; fill: #eee; }
.bandtext { font-size: 12px; text-anchor: middle; fill: #aaa; }
.splitter { height: 4px; background: repeating-linear-gradient(90deg, #444 0 1px, #fff 1px 3px) center / 42px 1px no-repeat, #fff; }
.waterfall { position: relative; flex: 1; min-height: 290px; background: #2d3e8b; }
.waterfall canvas { position: absolute; width: 100%; height: 100%; }
.rds, .info { position: absolute; bottom: 10px; border-radius: 4px; background: rgba(4, 9, 22, .93); color: #fff; font: 11px/19px "DejaVu Sans Mono", monospace; white-space: nowrap; }
.rds { left: 10px; width: 212px; height: 133px; display: flex; flex-direction: column; align-items: center; justify-content: space-between; padding: 8px 0 21px; font-size: 7px; line-height: 12px; }
.rds p { display: flex; align-items: center; gap: 14px; }
.rds strong { font-weight: 400; font-size: 21px; line-height: 28px; text-align: center; }
.info { left: 286px; width: 386px; padding: 12px 15px 13px; }
.play { display: flex; align-items: center; gap: 6px; }
.bar { flex: 1; height: 12px; border: 1px solid #3a3a3a; background: #1a1a1a; }
.bar i { display: block; height: 100%; background: #cb4242; }
.band { display: flex; height: 28px; gap: 1px; background: #e4e4e4; border-top: 1px solid #bbb; }
.band button { background: #fff; border: 1px solid #ddd; border-radius: 2px; display: flex; align-items: center; justify-content: center; }
.sq { width: 26px; } .kb { width: 39px; } .x5 { width: 53px; gap: 18px; }
.bandscale { flex: 1; min-width: 0; height: 27px; }
.levels { background: #000; color: #aaa; border-left: 1px solid #999; border-right: 1px solid #ccc; display: flex; flex-direction: column; }
.levels button { height: 28px; color: #ddd; border-bottom: 1px solid #444; background: linear-gradient(#444, #2c2c2c 49%, #0a0a0a 50%); }
.levels ul { flex: 1; display: grid; grid-auto-rows: 45px; align-content: start; justify-items: center; align-items: center; margin: 0 1px; padding-top: 23px; font-size: 8px; line-height: 18px; background: linear-gradient(#f3ef00, #fff) 0 126px / 100% 20px no-repeat, linear-gradient(#fff 0 24%, #b9c6f2 36%, #6c87dc 48%, #33489c 66%, #152160 80%, #04071c) 0 146px / 100% 184px no-repeat, linear-gradient(#ddd, #ddd) 0 330px / 100% 2px no-repeat; }
.levels .b { width: 28px; text-align: center; border-radius: 3px; background: rgba(70, 70, 75, .65); color: #d8d8d8; }

.statusbar { display: flex; align-items: center; height: 23px; padding: 0 2px 1px 6px; color: #444; background: #f0f0f0; }
.desc { flex: 1; color: #808080; }
.gauge { width: 46px; height: 12px; margin: 0 9px; padding: 1px; border: 1px solid #bbb; background: #e3e3e3; }
.gauge:last-child { margin-right: 0; }
.gauge i { display: block; height: 100%; background: #12a82c; }
.gauge .thin { width: 1px; }

.taskbar { display: grid; grid-template-columns: 1fr auto 1fr; align-items: center; height: 48px; padding: 0 20px 0 24px; background: #11282e; color: #eee; }
.taskbar > div:first-child { margin-left: -13px; }
.dock { display: flex; align-items: center; gap: 10px; }
.dock button { position: relative; width: 34px; height: 40px; display: grid; place-items: center; border-radius: 4px; }
.dock .start { width: 24px; margin-right: 4px; }
.dock .active { background: #22383e; }
.dock .active::after, .dock .run::after { content: ""; position: absolute; bottom: 1px; width: 14px; height: 3px; border-radius: 2px; background: #55bdf0; }
.dock .run::after { width: 5px; background: #9aa5a8; }
.search { display: flex; align-items: center; width: 219px; height: 31px; margin-right: -3px; padding: 0 6px 0 11px; border-radius: 16px; background: #2b4046; }
.search input { flex: 1; min-width: 0; border: 0; background: none; padding: 0 10px; font: inherit; font-size: 13px; color: #ddd; }
.search input::placeholder { color: #c9d0d2; }
.tray { display: flex; align-items: center; justify-content: flex-end; gap: 7px; }
.lang { margin: 0 14px 0 16px; }
.tray svg ~ svg + svg { margin-left: 1px; }
.tray time { text-align: right; margin-left: 10px; line-height: 16px; }
.count { width: 16px; height: 16px; border-radius: 50%; background: #4db7ef; color: #123; text-align: center; font-size: 10px; line-height: 16px; }
```
FILE: display.js
```js
const NS = 'http://www.w3.org/2000/svg';
let seed = 7;
function rnd() {
  seed = (seed * 1664525 + 1013904223) >>> 0;
  return seed / 4294967296;
}
function add(parent, name, attrs, text) {
  const el = document.createElementNS(NS, name);
  for (const k in attrs) el.setAttribute(k, attrs[k]);
  if (text) el.textContent = text;
  parent.appendChild(el);
}
function lerp(points, x) {
  for (let i = 1; i < points.length; i++) {
    const a = points[i - 1], b = points[i];
    if (x <= b[0]) return a.slice(1).map((v, k) => v + (b[k + 1] - v) * (x - a[0]) / (b[0] - a[0]));
  }
  return points[points.length - 1].slice(1);
}

// Spectrum trace: [x, level] pairs with a little noise between them
const levels = [[0,133],[10,130],[18,129],[23,125],[30,129],[48,131],[78,131],[118,131],[158,130],[170,128],[188,129],[203,125],[218,123],[248,124],[258,128],[278,128],[286,123],[292,127],[308,128],[328,129],[358,128],[366,125],[373,128],[403,127],[412,123],[420,127],[438,127],[448,123],[459,122],[461,110],[463,116],[470,114],[478,112],[488,112],[493,118],[498,124],[518,125],[530,120],[533,124],[548,124],[561,128],[573,124],[581,124],[590,121],[600,125],[703,124],[708,127],[718,125],[722,121],[728,126],[758,127],[774,125],[803,125],[808,123],[818,126],[838,123],[853,124],[862,125],[863,112],[865,121],[872,121],[874,112],[876,125],[893,124],[894,121],[898,127],[913,128],[933,126],[938,122],[943,125],[958,124]];
const xs = new Set(levels.map(p => p[0]));
for (let x = 0; x <= 958; x += 3) xs.add(x);
let d = 'M0 165';
for (const x of [...xs].sort((a, b) => a - b)) d += `L${x} ${(lerp(levels, x)[0] + (rnd() - 0.5) * 2.6).toFixed(1)}`;
document.getElementById('trace').setAttribute('d', d + 'L958 165z');

const ruler = document.getElementById('ruler');
for (let i = -4; i < 125; i++) {
  const x = 31 + i * 7.458, major = i % 10 === 0;
  add(ruler, 'path', { d: `M${x.toFixed(1)} 166v${major ? 5 : 3}`, stroke: '#aaa' });
  if (major && i >= 0) add(ruler, 'text', { x: x.toFixed(0), y: 182 }, (84.9 + i / 100).toFixed(3));
}
const ticks = document.getElementById('bandticks');
for (let i = -7; i < 58; i++) {
  const x = 89 + i * 12.62;
  add(ticks, 'path', { d: `M${x.toFixed(1)} 0v${i % 10 === 0 ? 6 : i % 2 ? 3 : 5}`, stroke: '#aaa' });
  if (i % 10 === 0) add(ticks, 'text', { x: x.toFixed(0), y: 21 }, (83 + i / 10).toFixed(3));
}

// Waterfall: [row, half width, strength] of the carrier down the history
const carrier = [[0,8,.25],[10,14,.45],[30,22,.62],[42,20,.6],[60,13,.5],[75,10,.35],[95,13,.4],[108,22,.55],[120,26,.7],[140,26,.8],[165,30,.95],[185,32,1],[275,26,.8],[284,32,.9],[291,18,.5]];
const bursts = [14,33,52,64,84,90,103,115,135,147,160,173,186,198,211,222,236,248,262,285];
const ramp = [[0,36,50,118],[.12,47,64,142],[.4,80,110,216],[.7,134,160,248],[1,195,210,255],[1.5,235,240,255]];
const c = document.getElementById('fall'), g = c.getContext('2d');
const img = g.createImageData(c.width, c.height);
const mid = 481;
for (let y = 0; y < c.height; y++) {
  const [w, s] = lerp(carrier, y);
  const ripple = (y % 4 < 2 ? 1 : .55) * (.7 + rnd() * .6);
  const sweep = (y - 9) % 43 === 0;
  for (let x = 0; x < c.width; x++) {
    const dx = Math.abs(x - mid);
    let v = .09 + .025 * x / c.width + (rnd() - .5) * .07;
    v += s * .72 * Math.exp(-Math.pow(dx / w, 2));
    v += s * .3 * ripple * Math.exp(-Math.pow(dx / (w * 1.9), 2));
    v += .05 * Math.exp(-Math.pow(dx / 75, 2));
    for (const b of bursts) {
      const strong = b === 33 || b === 115 || b === 135 || b === 173;
      const lift = strong ? Math.max(0, 5 - dx / 7) : Math.max(0, 2 - dx / 10);
      const k = Math.abs(y - b + lift);
      if (k < 1.4) v += (strong ? .34 : .22) * (1 - k / 1.4) * Math.exp(-Math.pow(dx / (strong ? 64 : 56), 4));
    }
    if (x > 528 && x < 536) v += .06 * (y < 130 ? 1 : .5);
    v += .05 * Math.exp(-Math.pow((x - 208) / 12, 2)) + .04 * Math.exp(-Math.pow((x - 240) / 12, 2)) + .03 * Math.exp(-Math.pow((x - 838) / 20, 2));
    if (x > 17 && x < 30) v += .02;
    if (x === 864 || x === 874) v += .13;
    if (sweep && Math.sin(x * .13) + Math.sin(x * .041) > -.4) v += .07;
    const p = lerp(ramp, Math.max(0, v)), i = (y * c.width + x) * 4;
    img.data[i] = p[0]; img.data[i + 1] = p[1]; img.data[i + 2] = p[2]; img.data[i + 3] = 255;
  }
}
g.putImageData(img, 0, 0);
for (const x of [386, 479, 483, 573, 576, 669]) {
  for (let y = 0; y < c.height; y += 4) {
    g.fillStyle = '#0b1228'; g.fillRect(x, y, 1, 2);
    g.fillStyle = '#93ab9c'; g.fillRect(x, y + 2, 1, 2);
  }
}
```
